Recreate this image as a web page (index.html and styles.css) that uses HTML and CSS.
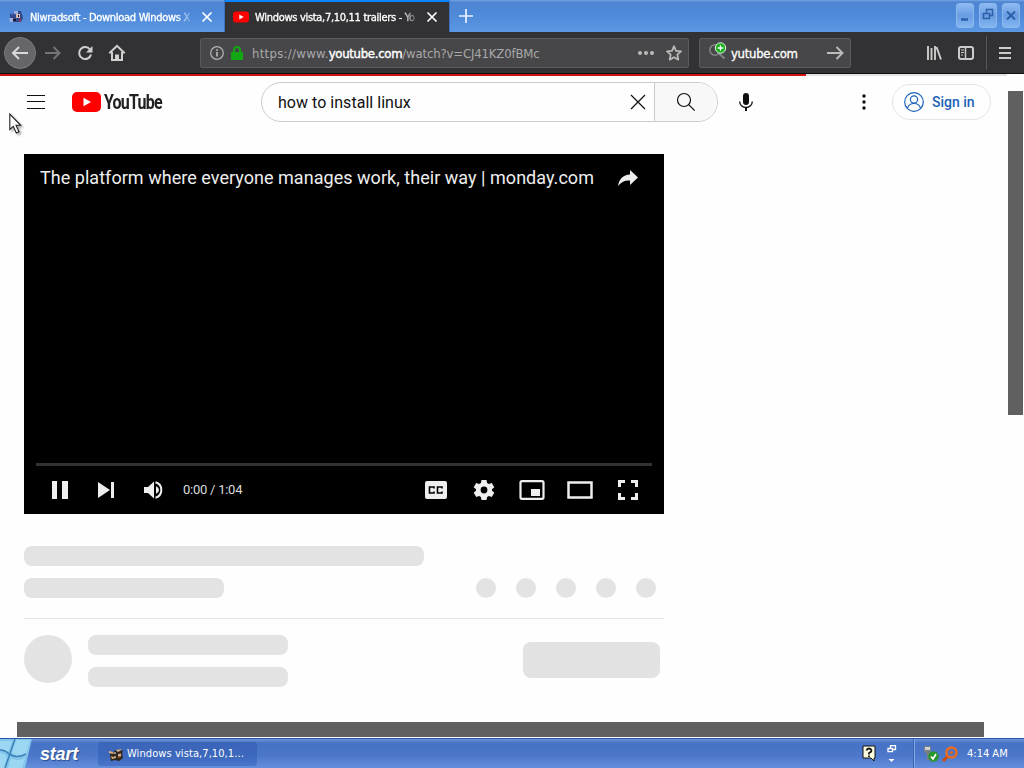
FILE: index.html
```html
<!DOCTYPE html>
<html lang="en">
<head>
    <meta charset="UTF-8">
    <meta name="viewport" content="width=device-width, initial-scale=1.0">
    <title>Windows vista,7,10,11 trailers - YouTube</title>
    <link rel="stylesheet" href="styles.css">
</head>
<body>
<div class="desktop">
    <div class="tabs">
        <div class="tab">
            <svg class="favicon" width="16" height="16" viewBox="0 0 16 16">
                <path d="M2 4l3 2 1-4h7l2 7-2 4H4l-2-3z" fill="#34488c"/>
                <path d="M1 9h4v4H2zM6 2h4v3H6z" fill="#9aaee2"/>
                <path d="M8 5h4v4H8z" fill="#d8b9b2"/>
                <path d="M10 6h1v2h-1zM5 10h3v2H5z" fill="#14172e"/>
                <path d="M11 10h2v3h-2z" fill="#863b54"/>
            </svg>
            <span class="tab-title">Niwradsoft - Download Windows X</span>
            <svg class="close" width="12" height="12" viewBox="0 0 12 12"><path d="M1.5 1.5l9 9m0-9l-9 9" stroke="#fff" stroke-width="1.7"/></svg>
        </div>
        <div class="tab active">
            <svg class="favicon" width="16" height="16" viewBox="0 0 16 16">
                <rect y="2.5" width="16" height="11" rx="3" fill="#f00"/>
                <path d="M6.3 5.5v5L10.700 8z" fill="#fff"/>
            </svg>
            <span class="tab-title">Windows vista,7,10,11 trailers - Yo</span>
            <svg class="close" width="12" height="12" viewBox="0 0 12 12"><path d="M1.5 1.5l9 9m0-9l-9 9" stroke="#fff" stroke-width="1.7"/></svg>
        </div>
        <svg class="new-tab" width="16" height="16" viewBox="0 0 16 16"><path d="M8 1v14M1 8h14" stroke="#e8f1ff" stroke-width="1.7"/></svg>
        <div class="window-buttons">
            <div class="win-btn"><svg width="18" height="24" viewBox="0 0 18 24"><path d="M4 15.5h7" stroke="#2d5fa9" stroke-width="2.5"/></svg></div>
            <div class="win-btn"><svg width="18" height="24" viewBox="0 0 18 24"><path d="M3.5 9.5h6v5h-6zM6.500 9V5.500h6v6H10" fill="none" stroke="#2d5fa9" stroke-width="1.5"/></svg></div>
            <div class="win-btn"><svg width="18" height="24" viewBox="0 0 18 24"><path d="M4 7.500l8 8m0-8l-8 8" stroke="#2d5fa9" stroke-width="2"/></svg></div>
        </div>
    </div>

    <div class="toolbar">
        <div class="back">
            <svg width="18" height="16" viewBox="0 0 18 16"><path d="M17 8H2.500M8 2L2 8l6 6" fill="none" stroke="#d8d8d9" stroke-width="2"/></svg>
        </div>
        <svg class="forward" width="16" height="16" viewBox="0 0 16 16"><path d="M0 8h14M8.500 2l6 6-6 6" fill="none" stroke="#747476" stroke-width="2"/></svg>
        <svg class="reload" width="16" height="16" viewBox="0 0 16 16"><path d="M13 4.500a6 6 0 1 0 1 5" fill="none" stroke="#d0d0d1" stroke-width="2"/><path d="M15.500 1v6.500H9z" fill="#d0d0d1"/></svg>
        <svg class="home" width="18" height="18" viewBox="0 0 18 18"><path d="M1.300 9.300L9 1.800l7.700 7.500M4 8v8h10V8" fill="none" stroke="#d0d0d1" stroke-width="2"/><path d="M7 16v-5.500h4V16z" fill="#d0d0d1"/></svg>
        <div class="urlbar">
            <svg class="info" width="14" height="14" viewBox="0 0 14 14"><circle cx="7" cy="7" r="6.300" fill="none" stroke="#b5b5b6" stroke-width="1.200"/><path d="M7 6v4.500M7 3.300V5" stroke="#b5b5b6" stroke-width="1.700"/></svg>
            <svg class="lock" width="12" height="14" viewBox="0 0 12 14"><path d="M3 7V4a3 3 0 0 1 6 0v3" fill="none" stroke="#13a713" stroke-width="2"/><rect y="6" width="12" height="8" rx="1" fill="#13a713"/></svg>
            <span class="url"><span class="scheme">https://www.</span><b>youtube.com</b>/watch?v=CJ41KZ0fBMc</span>
            <svg class="dots" width="16" height="4" viewBox="0 0 16 4"><g fill="#bbb"><circle cx="2" cy="2" r="2"/><circle cx="8" cy="2" r="2"/><circle cx="14" cy="2" r="2"/></g></svg>
            <svg class="star" width="16" height="16" viewBox="0 0 16 16"><path d="M8 1.200l2 4.600 5 .5-3.700 3.400 1 5L8 12.200l-4.300 2.500 1-5L1 6.300l5-.5z" fill="none" stroke="#bbb" stroke-width="1.700" stroke-linejoin="round"/></svg>
        </div>
        <div class="searchbar">
            <svg width="20" height="18" viewBox="0 0 20 18"><circle cx="7" cy="8" r="5.200" fill="none" stroke="#838385" stroke-width="1.600"/><path d="M11 11.500l5.500 5" stroke="#838385" stroke-width="2"/><circle cx="12.500" cy="6" r="5.200" fill="#18ad1d" stroke="#e6f7e6"/><path d="M12.500 3.200v5.600M9.700 6h5.600" stroke="#fff" stroke-width="1.300"/></svg>
            <span>yutube.com</span>
            <svg class="go" width="17" height="14" viewBox="0 0 17 14"><path d="M0 7h15M9.500 1l6 6-6 6" fill="none" stroke="#bbb" stroke-width="1.900"/></svg>
        </div>
        <div class="tools">
            <svg width="16" height="16" viewBox="0 0 16 16"><path d="M2 1v14M5.500 3v12M9 1v14M10.500 2L15 14.500" fill="none" stroke="#ccc" stroke-width="1.900"/></svg>
            <svg width="16" height="14" viewBox="0 0 16 14"><rect x="1" y="1" width="14" height="12" rx="2" fill="none" stroke="#ccc" stroke-width="2"/><path d="M7.500 1v12" stroke="#ccc" stroke-width="1.500"/><path d="M3 4h3M3 6.500h3M3 9h2" stroke="#ccc"/></svg>
            <div class="menu-holder"><svg width="12" height="12" viewBox="0 0 12 12"><path d="M0 1h12M0 6h12M0 11h12" stroke="#ccc" stroke-width="2"/></svg></div>
        </div>
    </div>

    <div class="page">
        <div class="progress"><div class="loaded"></div></div>
        <div class="masthead">
            <svg class="hamburger" width="18" height="14" viewBox="0 0 18 14"><path d="M0 .5h18M0 6.500h18M0 13.500h18" stroke="#0f0f0f"/></svg>
            <div class="logo">
                <svg width="29" height="20" viewBox="0 0 29 20"><rect width="29" height="20" rx="5" fill="#f00"/><path d="M11.500 5.700v8.600l7.500-4.300z" fill="#fff"/></svg>
                <span>YouTube</span>
            </div>
            <div class="search">
                <div class="search-input">
                    <span>how to install linux</span>
                    <svg width="16" height="16" viewBox="0 0 16 16"><path d="M1 1l14 14M15 1L1 15" stroke="#0f0f0f" stroke-width="1.200"/></svg>
                </div>
                <div class="search-button">
                    <svg width="20" height="20" viewBox="0 0 20 20"><circle cx="8" cy="8" r="6.500" fill="none" stroke="#0f0f0f" stroke-width="1.200"/><path d="M12.700 12.700l6 6" stroke="#0f0f0f" stroke-width="1.200"/></svg>
                </div>
            </div>
            <svg class="mic" width="14" height="18" viewBox="0 0 14 18"><rect x="4" width="6" height="12" rx="3" fill="#0f0f0f"/><path d="M.7 8.500a6.300 6 0 0 0 12.600 0" fill="none" stroke="#0f0f0f" stroke-width="1.300"/><path d="M7 14.500V18" stroke="#0f0f0f" stroke-width="2"/></svg>
            <svg class="kebab" width="4" height="16" viewBox="0 0 4 16"><g fill="#0f0f0f"><circle cx="2" cy="2" r="1.700"/><circle cx="2" cy="8" r="1.700"/><circle cx="2" cy="14" r="1.700"/></g></svg>
            <div class="sign-in">
                <svg width="20" height="20" viewBox="0 0 20 20"><g fill="none" stroke="#1c62b9" stroke-width="1.200"><circle cx="10" cy="10" r="9.300"/><circle cx="10" cy="7.500" r="3.600"/><path d="M3.500 16c1-3 3.500-4.500 6.500-4.500s5.500 1.500 6.500 4.500"/></g></svg>
                <span>Sign in</span>
            </div>
        </div>

        <div class="watch">
            <div class="player">
                <div class="player-top">
                    <span>The platform where everyone manages work, their way | monday.com</span>
                    <svg width="20" height="16" viewBox="0 0 20 16"><path d="M12 0l8 7.500-8 7.500v-4.500C7 10 3 12 0 16 1 9 5 5 12 4.500z" fill="#eee"/></svg>
                </div>
                <div class="player-bottom">
                    <div class="track"></div>
                    <div class="controls">
                        <svg width="16" height="18" viewBox="0 0 16 18"><path d="M0 0h5v18H0zM10 0h6v18h-6z" fill="#eee"/></svg>
                        <svg class="next" width="16" height="16" viewBox="0 0 16 16"><path d="M0 0l12 8-12 8zM13 0h3v16h-3z" fill="#eee"/></svg>
                        <svg class="volume" width="19" height="18" viewBox="0 0 19 18"><path d="M0 6h4l6-5.500v17L4 12H0z" fill="#eee"/><path d="M12 5.200q3 1.300 3 3.800t-3 3.800z" fill="#eee"/><path d="M11.500 1.300a8 8 0 0 1 0 15.400" fill="none" stroke="#eee" stroke-width="2"/></svg>
                        <span class="time">0:00 / 1:04</span>
                        <div class="right-controls">
                            <svg width="24" height="20" viewBox="0 0 24 20"><rect x="1" y="1" width="22" height="18" rx="2" fill="#eee"/><path d="M10 8.500V7H5.500v6H10v-1.500M18 8.500V7h-4.500v6H18v-1.500" fill="none" stroke="#000" stroke-width="1.600"/></svg>
                            <svg width="24" height="20" viewBox="0 0 24 20"><path d="M9.500 0h5l.6 3 1.800 1 2.900-1 2.500 4.300-2.300 2v1.400l2.300 2-2.500 4.300-2.900-1-1.800 1-.6 3h-5l-.6-3-1.800-1-2.900 1-2.500-4.300 2.300-2V9.300l-2.300-2L4.200 3l2.900 1 1.800-1z" fill="#eee"/><circle cx="12" cy="10" r="3.400" fill="#000"/></svg>
                            <svg width="26" height="20" viewBox="0 0 26 20"><rect x="1.500" y="1.200" width="23" height="17.600" rx="1.500" fill="none" stroke="#eee" stroke-width="2.200"/><path d="M12 9h9v7h-9z" fill="#eee"/></svg>
                            <svg width="26" height="18" viewBox="0 0 26 18"><rect x="1.500" y="1.500" width="23" height="15" fill="none" stroke="#eee" stroke-width="2.500"/></svg>
                            <svg width="20" height="20" viewBox="0 0 20 20"><path d="M1.500 7V1.500H7M13 1.500h5.500V7M18.500 13v5.500H13M7 18.500H1.500V13" fill="none" stroke="#eee" stroke-width="3"/></svg>
                        </div>
                    </div>
                </div>
            </div>
            <div class="skeleton title-line"></div>
            <div class="info-row">
                <div class="skeleton short-line"></div>
                <div class="circles">
                    <i></i><i></i><i></i><i></i><i></i>
                </div>
            </div>
            <div class="channel">
                <div class="avatar"></div>
                <div class="channel-lines">
                    <div class="skeleton"></div>
                    <div class="skeleton"></div>
                </div>
                <div class="subscribe"></div>
            </div>
        </div>
        <div class="scroll-v"></div>
        <div class="scroll-h"></div>
        <svg class="cursor" width="14" height="22" viewBox="0 0 14 22"><path d="M.8 1v15.500l3.500-3.200 3 6.700 2.700-1.200L7 12.300h4.700z" fill="#fff" stroke="#222" stroke-width="1.100"/></svg>
    </div>

    <div class="taskbar">
        <svg class="flag" width="32" height="29" viewBox="0 0 32 29">
            <path d="M0 0h32l-7 29H0z" fill="#82c4ea"/>
            <path d="M0 2h12L8 14Q4 10 0 10zM16 1h14l-4 15q-7 4-14-2zM0 14q4 0 7 4l-3 11H0zM11 19q7 4 14 0l-3 10H8z" fill="#9bd6f2"/>
            <path d="M15 0L5 29M0 11q5 0 9 4 8 5 17 0" fill="none" stroke="#3b82b8" stroke-width="1.500"/>
        </svg>
        <span class="start">start</span>
        <div class="task">
            <svg width="16" height="16" viewBox="0 0 16 16"><path d="M2 8l4-2 1-2 3 2 5-2-1 4 1 4-4 3-4-1-4 1z" fill="#32261c"/><path d="M1 5l4 1 1 2-5-1zM8 4l6-1-4 3zM3 10l5 2-4 1z" fill="#e2ae72"/><path d="M10 8l3-1v4l-3 1z" fill="#9d6039"/><path d="M10 9h3M6 7h2M6 11h2" stroke="#fff"/></svg>
            <span>Windows vista,7,10,1...</span>
        </div>
        <div class="tray-left">
            <svg width="14" height="17" viewBox="0 0 14 17"><path d="M1 1h12v12h-1v3l-3-3H1z" fill="#ffffe1" stroke="#111"/><path d="M4.500 5.500Q5 3.500 7 3.500t2.500 2Q9.500 7 7 8v1.500M7 10.500v1.500" fill="none" stroke="#111" stroke-width="1.800"/></svg>
            <svg width="10" height="18" viewBox="0 0 10 18"><path d="M3.500 3V.7h5v3.800H6M1 3.500h4.500v3.200H1z" fill="none" stroke="#fff" stroke-width="1.300"/><path d="M1.500 14h6l-3 3z" fill="#fff"/></svg>
        </div>
        <div class="tray">
            <svg width="16" height="18" viewBox="0 0 16 18"><path d="M1 1h7v5l-1 2v7H4V9L1 7z" fill="#777f80"/><path d="M2 2h5v3H2z" fill="#ccd3d4"/><circle cx="10.500" cy="11.500" r="5.200" fill="#27962c"/><path d="M8 11.500l2 2.500 3-5" fill="none" stroke="#fff" stroke-width="1.600"/></svg>
            <svg width="16" height="16" viewBox="0 0 16 16"><path d="M6 10l-5 5" stroke="#c94d0a" stroke-width="3"/><circle cx="9.500" cy="6.500" r="5" fill="none" stroke="#ed6b1c" stroke-width="2.500"/><circle cx="9.500" cy="6.500" r="1.600" fill="#e36418"/></svg>
            <span class="clock">4:14 AM</span>
        </div>
    </div>
</div>
</body>
</html>
```
FILE: styles.css
```css
* {
    box-sizing: border-box;
}
body {
    margin: 0;
    font-family: Roboto, Arial, sans-serif;
}
svg {
    display: block;
    flex: none;
}
.desktop {
    width: 1024px;
    height: 768px;
    display: flex;
    flex-direction: column;
    overflow: hidden;
}
.tabs {
    height: 32px;
    flex: none;
    display: flex;
    background: linear-gradient(#74a5e3 0, #4f86d3 2px, #4d87d7 12px, #5b98e4 32px);
    font-family: "DejaVu Sans Condensed", "DejaVu Sans", sans-serif;
    font-size: 11px;
    color: #fff;
}
.tab {
    width: 225px;
    height: 32px;
    display: flex;
    align-items: center;
    padding: 2px 11px 0 8px;
    border-right: 1px solid #3d71b9;
}
.active {
    background: #323234;
    border-top: 2px solid #0a84ff;
    padding-top: 0;
}
.tab-title {
    width: 164px;
    margin-left: 6px;
    white-space: nowrap;
    letter-spacing: -0.3px;
    -webkit-text-stroke: 0.3px;
    -webkit-mask-image: linear-gradient(to right, #000 147px, transparent 164px);
    mask-image: linear-gradient(to right, #000 147px, transparent 164px);
}
.close {
    margin-left: auto;
}
.new-tab {
    margin: 8px 0 0 8px;
}
.window-buttons {
    margin-left: auto;
    padding: 3px 4px 0 0;
    display: flex;
    gap: 5px;
}
.win-btn {
    width: 18px;
    height: 25px;
    border-radius: 3px;
    background: linear-gradient(#8db9f0, #699de2 50%, #82b6f1);
    border: 1px solid #8db8ed;
    overflow: hidden;
}
.toolbar {
    height: 42px;
    flex: none;
    display: flex;
    align-items: center;
    padding: 0 13px 0 4px;
    background: #323234;
    border-bottom: 1px solid #101012;
}
.back {
    width: 32px;
    height: 32px;
    border-radius: 50%;
    border: 1px solid #7b7b7c;
    background: #666668;
    display: flex;
    align-items: center;
    justify-content: center;
}
.forward {
    margin-left: 9px;
}
.reload {
    margin-left: 16px;
}
.home {
    margin-left: 15px;
}
.urlbar,
.searchbar {
    height: 30px;
    display: flex;
    align-items: center;
    background: #474749;
    border: 1px solid #5b5959;
    border-radius: 2px;
    font-family: "DejaVu Sans Condensed", "DejaVu Sans", sans-serif;
    font-size: 13px;
    color: #a9a9aa;
}
.urlbar {
    width: 489px;
    margin-left: 74px;
    padding: 0 6px 0 9px;
}
.lock {
    margin-left: 7px;
}
.url {
    margin-left: 9px;
    padding-top: 1px;
    white-space: nowrap;
    letter-spacing: -0.15px;
}
.scheme {
    letter-spacing: 0.3px;
}
.url b {
    color: #fff;
    font-weight: normal;
    letter-spacing: -0.3px;
    -webkit-text-stroke: 0.4px;
}
.dots {
    margin-left: auto;
}
.star {
    margin-left: 12px;
}
.searchbar {
    width: 152px;
    margin-left: 10px;
    padding: 0 6px 0 8px;
    color: #fff;
}
.searchbar svg:first-child {
    margin-top: -4px;
}
.searchbar span {
    margin-left: 3px;
    padding-top: 1px;
    letter-spacing: -0.3px;
    -webkit-text-stroke: 0.3px;
}
.go {
    margin-left: auto;
}
.tools {
    margin-left: auto;
    height: 100%;
    display: flex;
    align-items: center;
    gap: 16px;
}
.menu-holder {
    height: 34px;
    margin-left: -4px;
    padding: 0 0 0 12px;
    display: flex;
    align-items: center;
    border-left: 1px solid #58585a;
}
.page {
    position: relative;
    flex: 1;
    background: #fefefe;
}
.progress {
    width: 1007px;
    height: 2px;
    background: #e2e2e2;
}
.loaded {
    width: 806px;
    height: 2px;
    background: #d11112;
}
.masthead {
    height: 52px;
    width: 1008px;
    display: flex;
    align-items: center;
    padding: 0 17px 0 27px;
}
.logo {
    width: 90px;
    margin-left: 27px;
    display: flex;
    align-items: center;
}
.logo span {
    margin-left: 3px;
    font-size: 20px;
    font-weight: bold;
    letter-spacing: -1px;
    color: #212121;
    transform: scaleX(0.8);
    transform-origin: left center;
}
.search {
    width: 457px;
    height: 40px;
    margin-left: 99px;
    display: flex;
    border: 1px solid #ccc;
    border-radius: 20px;
    overflow: hidden;
}
.search-input {
    flex: 1;
    display: flex;
    align-items: center;
    justify-content: space-between;
    padding: 0 8px 0 16px;
    font-size: 16px;
    letter-spacing: 0.03px;
    color: #111;
}
.search-button {
    width: 63px;
    display: flex;
    align-items: center;
    justify-content: center;
    background: #f8f8f8;
    border-left: 1px solid #ccc;
}
.mic {
    margin-left: 21px;
}
.kebab {
    margin-left: auto;
}
.sign-in {
    width: 99px;
    height: 36px;
    margin-left: 26px;
    padding-left: 11px;
    display: flex;
    align-items: center;
    gap: 8px;
    border: 1px solid #e5e5e5;
    border-radius: 18px;
    color: #1c62b9;
    font-size: 14px;
    font-weight: 500;
}
.watch {
    width: 640px;
    margin: 26px 0 0 24px;
}
.player {
    height: 360px;
    display: flex;
    flex-direction: column;
    justify-content: space-between;
    background: #000;
    color: #eee;
}
.player-top {
    display: flex;
    align-items: center;
    justify-content: space-between;
    height: 48px;
    padding: 0 26px 0 16px;
    font-size: 18px;
    letter-spacing: 0.035px;
    white-space: nowrap;
}
.player-top span {
    padding-bottom: 2px;
}
.player-bottom {
    padding: 0 12px;
}
.track {
    height: 3px;
    background: #333;
}
.controls {
    height: 48px;
    display: flex;
    align-items: center;
    padding-left: 16px;
}
.next {
    margin-left: 30px;
}
.volume {
    margin-left: 30px;
}
.time {
    margin-left: 20px;
    padding-bottom: 1px;
    font-size: 13px;
    letter-spacing: -0.25px;
    color: #ddd;
}
.right-controls {
    margin-left: auto;
    display: grid;
    grid-template-columns: repeat(5, 48px);
    align-items: center;
    justify-items: center;
}
.skeleton {
    height: 20px;
    border-radius: 8px;
    background: #e3e3e3;
}
.title-line {
    width: 400px;
    margin-top: 32px;
}
.info-row {
    height: 53px;
    padding: 12px 8px 0 0;
    display: flex;
    justify-content: space-between;
    border-bottom: 1px solid #e6e6e6;
}
.short-line {
    width: 200px;
}
.circles {
    display: flex;
    gap: 20px;
}
.circles i {
    width: 20px;
    height: 20px;
    border-radius: 50%;
    background: #e3e3e3;
}
.channel {
    display: flex;
    padding: 16px 4px 0 0;
}
.avatar {
    width: 48px;
    height: 48px;
    border-radius: 50%;
    background: #e3e3e3;
}
.channel-lines {
    width: 200px;
    margin-left: 16px;
    display: flex;
    flex-direction: column;
    gap: 12px;
}
.subscribe {
    width: 137px;
    height: 36px;
    margin: 7px 0 0 auto;
    border-radius: 8px;
    background: #e2e2e2;
}
.scroll-v {
    position: absolute;
    left: 1008px;
    top: 17px;
    width: 15px;
    height: 324px;
    background: #606060;
}
.scroll-h {
    position: absolute;
    left: 17px;
    top: 648px;
    width: 967px;
    height: 15px;
    background: #606060;
}
.cursor {
    position: absolute;
    left: 9px;
    top: 39px;
    filter: drop-shadow(2px 2px 1px rgba(0, 0, 0, 0.3));
}
.taskbar {
    height: 30px;
    flex: none;
    display: flex;
    align-items: center;
    border-top: 1px solid #2856a8;
    background: linear-gradient(#6d94da, #4673c5 4px, #4b76c9 16px, #648fdc);
    font-family: "DejaVu Sans Condensed", "DejaVu Sans", sans-serif;
    font-size: 11px;
    color: #fff;
}
.start {
    width: 40px;
    margin-left: 8px;
    font-family: "Liberation Sans", Arial, sans-serif;
    font-size: 18px;
    font-weight: bold;
    font-style: italic;
    letter-spacing: -0.2px;
    line-height: 26px;
    text-shadow: 1px 1px 1px #2c4a87;
}
.task {
    width: 159px;
    height: 24px;
    margin-left: 18px;
    padding-left: 10px;
    display: flex;
    align-items: center;
    gap: 3px;
    border-radius: 3px;
    background: linear-gradient(#3b65b8, #3c68bd 60%, #4a75ca);
    letter-spacing: 0.08px;
    white-space: nowrap;
}
.tray-left {
    margin-left: auto;
    display: flex;
    align-items: center;
    gap: 11px;
    padding-right: 17px;
}
.tray {
    width: 110px;
    height: 29px;
    display: flex;
    align-items: center;
    gap: 3px;
    padding-left: 8px;
    border-left: 1px solid #7fa7e5;
    box-shadow: -1px 0 #3b65b2;
}
.clock {
    margin-left: 6px;
    white-space: nowrap;
}
```
